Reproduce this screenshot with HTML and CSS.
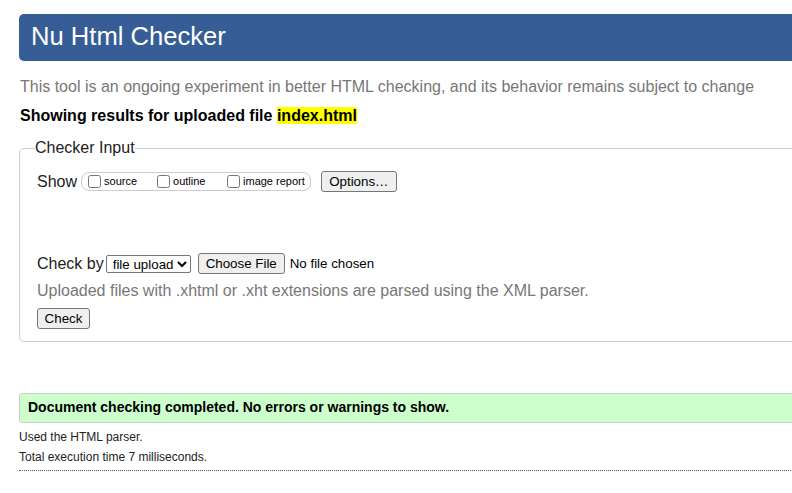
FILE: index.html
```html
<!DOCTYPE html>
<html lang="en">
<head>
<meta charset="utf-8">
<title>Showing results for index.html - Nu Html Checker</title>
<link rel="stylesheet" href="styles.css">
</head>
<body>
<div class="page">
  <h1 class="banner">Nu Html Checker</h1>
  <p class="intro">This tool is an ongoing experiment in better HTML checking, and its behavior remains subject to change</p>
  <p class="showing">Showing results for uploaded file <span class="hl">index.html</span></p>
  <form class="checker">
    <fieldset class="checker-input">
      <legend class="checker-legend">Checker Input</legend>
      <div class="row row-show">
        <span class="label-text">Show</span>
        <span class="show-group">
          <label class="opt opt-source"><input type="checkbox" class="cb">source</label>
          <label class="opt opt-outline"><input type="checkbox" class="cb">outline</label>
          <label class="opt opt-image"><input type="checkbox" class="cb">image report</label>
        </span>
        <button type="button" class="btn btn-options">Options…</button>
      </div>
      <div class="row row-check-by">
        <span class="label-text">Check by</span>
        <select class="sel">
          <option>file upload</option>
        </select>
        <span class="file">
          <span class="btn btn-file">Choose File</span>
          <span class="file-name">No file chosen</span>
        </span>
      </div>
      <p class="note">Uploaded files with .xhtml or .xht extensions are parsed using the XML parser.</p>
      <div class="row-submit">
        <button type="button" class="btn btn-check">Check</button>
      </div>
    </fieldset>
  </form>
  <p class="success">Document checking completed. No errors or warnings to show.</p>
  <p class="stats">Used the HTML parser.</p>
  <p class="stats stats-time">Total execution time 7 milliseconds.</p>
  <hr class="end">
</div>
</body>
</html>
```
FILE: styles.css
```css
html, body {
  margin: 0;
  padding: 0;
  background: #fff;
  overflow: hidden;
}
body {
  font-family: "Liberation Sans", Arial, sans-serif;
  color: #000;
}
.page {
  padding-left: 19px;
  padding-top: 14px;
  width: 900px;
}
.banner {
  margin: 0;
  height: 47px;
  line-height: 45px;
  padding-left: 12px;
  background: #365d95;
  color: #fff;
  font-size: 25.6px;
  font-weight: normal;
  border-radius: 5px;
}
.intro {
  margin: 17px 0 0 1px;
  font-size: 16px;
  line-height: 18px;
  color: #777;
}
.showing {
  margin: 11px 0 0 1px;
  font-size: 16px;
  line-height: 18px;
  font-weight: bold;
  color: #000;
}
.hl {
  background: #ffff00;
}
.checker {
  margin: 0;
}
.checker-input {
  margin: 14px 0 0 0;
  padding: 14px 16px 12px 17px;
  border: 1px solid #ccc;
  border-radius: 5px;
  min-width: 0;
}
.checker-legend {
  padding: 0;
  margin-left: -2px;
  font-size: 16px;
  line-height: 18px;
  color: #222;
}
.row {
  display: flex;
  align-items: center;
  height: 21px;
}
.label-text {
  font-size: 16px;
  line-height: 18px;
  color: #222;
}
.show-group {
  display: flex;
  align-items: center;
  height: 17px;
  margin-left: 4px;
  padding: 0 5px 0 2px;
  border: 1px solid #ccc;
  border-radius: 8px;
}
.opt {
  display: flex;
  align-items: center;
  font-size: 11px;
  line-height: 13px;
  color: #000;
}
.opt-source { width: 69px; }
.opt-outline { width: 70px; }
.cb {
  width: 13px;
  height: 13px;
  margin: 0 3px 0 4px;
}
.btn {
  display: inline-flex;
  align-items: center;
  justify-content: center;
  box-sizing: border-box;
  height: 21px;
  padding: 0 7px;
  border: 1px solid #767676;
  border-radius: 3px;
  background: #efefef;
  color: #000;
  font-family: "Liberation Sans", Arial, sans-serif;
  font-size: 13.33px;
  line-height: 15px;
}
.btn-options {
  margin-left: 10px;
  width: 76px;
  padding: 0;
}
.row-check-by {
  margin-top: 61px;
}
.sel {
  box-sizing: border-box;
  margin-left: 2px;
  width: 85px;
  height: 18px;
  padding: 0 0 0 2px;
  border: 1px solid #767676;
  border-radius: 2px;
  background: #fff;
  color: #000;
  font-family: "Liberation Sans", Arial, sans-serif;
  font-size: 13.33px;
}
.file {
  display: inline-flex;
  align-items: center;
  margin-left: 7px;
}
.btn-file {
  width: 87px;
  padding: 0;
}
.file-name {
  margin-left: 5px;
  font-size: 13.33px;
  color: #000;
}
.note {
  margin: 7px 0 0 0;
  font-size: 16px;
  line-height: 19px;
  color: #777;
}
.row-submit {
  margin-top: 8px;
  display: flex;
}
.btn-check {
  width: 53px;
  padding: 0;
}
.success {
  margin: 51px 0 0 0;
  padding: 5px 8px 6px;
  border: 1px solid #ccc;
  border-radius: 3px;
  background: #ccffcc;
  font-size: 14px;
  line-height: 17px;
  font-weight: bold;
  color: #000;
}
.stats {
  margin: 7px 0 0 0;
  font-size: 12px;
  line-height: 14px;
  color: #222;
}
.stats-time {
  margin-top: 6px;
}
.end {
  margin: 6px 0 0 0;
  height: 0;
  border: 0;
  border-top: 1px dotted #555;
}
```
